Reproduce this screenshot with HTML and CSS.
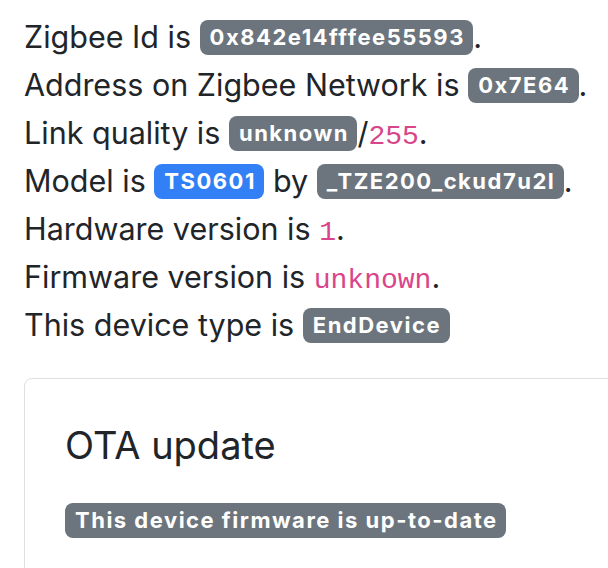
FILE: index.html
```html
<!DOCTYPE html>
<html lang="en">
<head>
    <meta charset="UTF-8">
    <meta name="viewport" content="width=device-width, initial-scale=1.0">
    <title>Device info</title>
    <link rel="stylesheet" href="styles.css">
</head>
<body>
    <div class="page">
        <div class="info">
            <div class="line">Zigbee Id is <span class="badge">0x842e14fffee55593</span>.</div>
            <div class="line">Address on Zigbee Network is <span class="badge">0x7E64</span>.</div>
            <div class="line">Link quality is <span class="badge">unknown</span>/<code>255</code>.</div>
            <div class="line">Model is <span class="badge primary">TS0601</span> by <span class="badge">_TZE200_ckud7u2l</span>.</div>
            <div class="line">Hardware version is <code>1</code>.</div>
            <div class="line">Firmware version is <code>unknown</code>.</div>
            <div class="line">This device type is <span class="badge">EndDevice</span></div>
        </div>

        <div class="card">
            <div class="card-body">
                <h5 class="card-title">OTA update</h5>
                <div><span class="badge">This device firmware is up-to-date</span></div>
            </div>
        </div>
    </div>
</body>
</html>
```

FILE: styles.css
```css
body {
    margin: 0;
    font-family: Inter, "Noto Sans", sans-serif;
    font-size: 30.5px;
    line-height: 48px;
    color: #212529;
    background-color: #fff;
    overflow: hidden;
}

.page {
    padding: 13px 0 0 24px;
}

.info {
    margin-bottom: 29px;
}

.badge {
    display: inline-block;
    padding: 6.5px 8.5px 6.5px 10px;
    font-size: 22px;
    font-weight: 700;
    letter-spacing: 1.5px;
    line-height: 1;
    color: #fff;
    background-color: #6c757d;
    border-radius: 8px;
    vertical-align: 3px;
}

.badge.primary {
    background-color: #3380f6;
}

code {
    font-family: "Liberation Mono", "DejaVu Sans Mono", monospace;
    font-size: 28px;
    line-height: 1;
    color: #d9458a;
}

.card {
    width: 700px;
    border: 1px solid #dfdfdf;
    border-radius: 8px;
}

.card-body {
    padding: 42px 40px 40px;
}

.card-title {
    margin: 0 0 27px;
    font-size: 38px;
    font-weight: 400;
    line-height: 48px;
}
```
